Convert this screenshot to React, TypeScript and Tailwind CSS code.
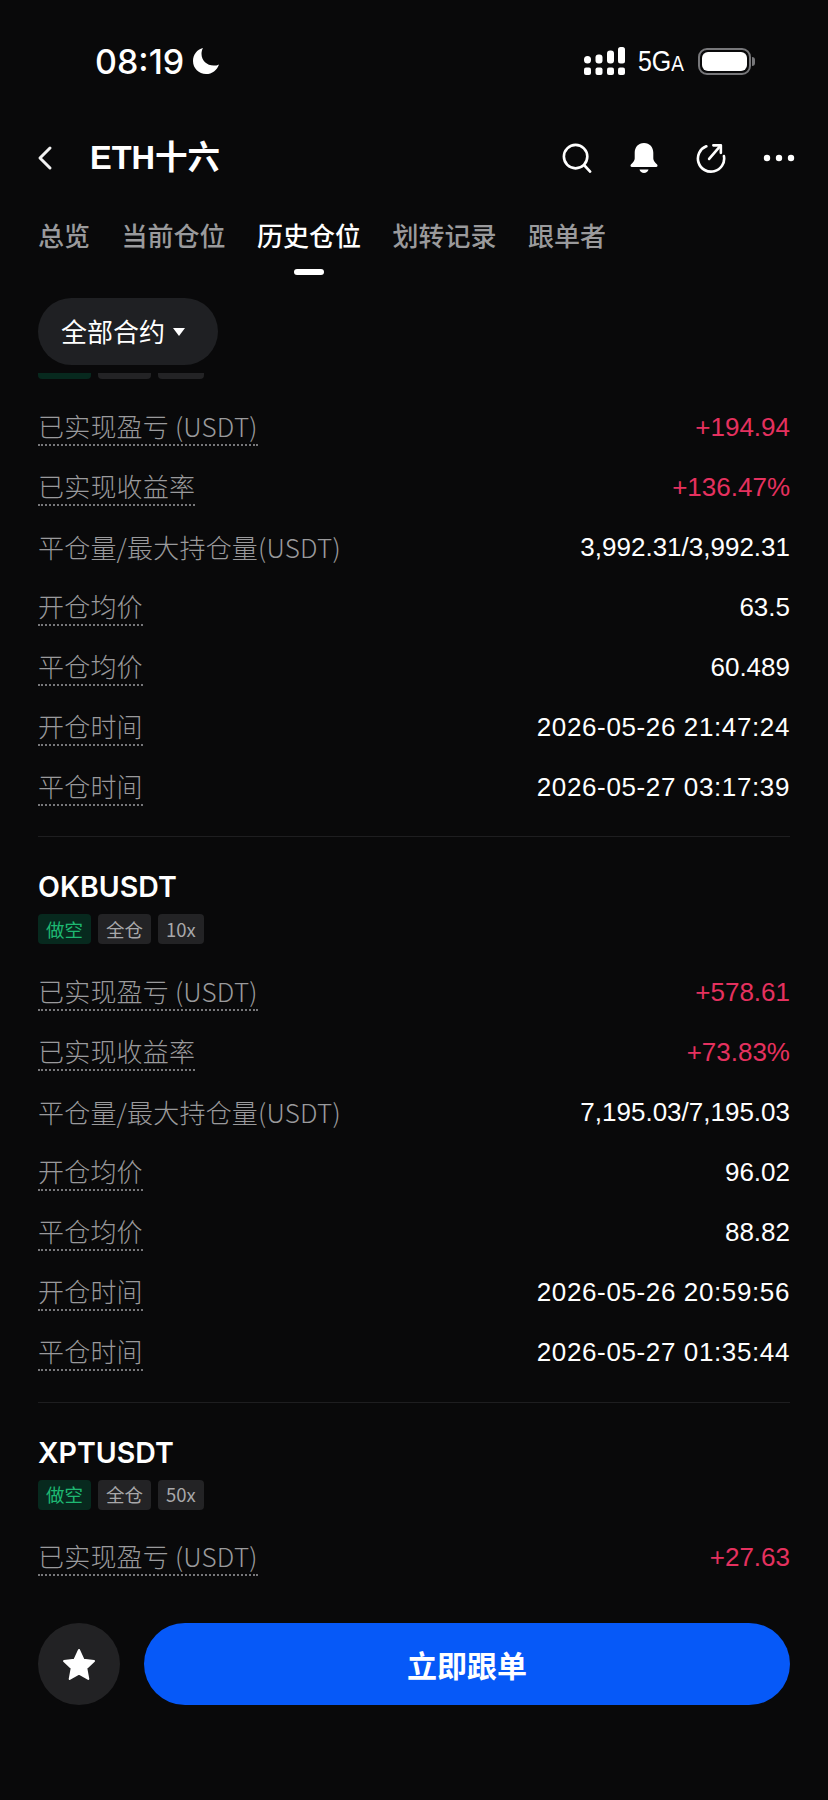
import React from "react";

const sans = "font-['Liberation_Sans','Noto_Sans_CJK_SC',sans-serif]";

type Row = { label: string; value: string; hint?: boolean; red?: boolean };
type Card = { symbol?: string; leverage?: string; rows: Row[] };

const makeRows = (
  pnl: string,
  rate: string,
  size: string,
  open: string,
  close: string,
  openAt: string,
  closeAt: string,
): Row[] => [
  { label: "已实现盈亏 (USDT)", value: pnl, hint: true, red: true },
  { label: "已实现收益率", value: rate, hint: true, red: true },
  { label: "平仓量/最大持仓量(USDT)", value: size },
  { label: "开仓均价", value: open, hint: true },
  { label: "平仓均价", value: close, hint: true },
  { label: "开仓时间", value: openAt, hint: true },
  { label: "平仓时间", value: closeAt, hint: true },
];

const cards: Card[] = [
  {
    // scrolled under the filter, only the bottom of its tags shows
    rows: makeRows(
      "+194.94",
      "+136.47%",
      "3,992.31/3,992.31",
      "63.5",
      "60.489",
      "2026-05-26 21:47:24",
      "2026-05-27 03:17:39",
    ),
  },
  {
    symbol: "OKBUSDT",
    leverage: "10x",
    rows: makeRows(
      "+578.61",
      "+73.83%",
      "7,195.03/7,195.03",
      "96.02",
      "88.82",
      "2026-05-26 20:59:56",
      "2026-05-27 01:35:44",
    ),
  },
  {
    symbol: "XPTUSDT",
    leverage: "50x",
    rows: [{ label: "已实现盈亏 (USDT)", value: "+27.63", hint: true, red: true }],
  },
];

const tabs = ["总览", "当前仓位", "历史仓位", "划转记录", "跟单者"];

const StatusBar = () => (
  <div className="flex h-[122px] shrink-0 items-center justify-between pl-[95px] pr-[73px]">
    <div className="flex items-center gap-[8px] text-white">
      <span className="font-['Inter',sans-serif] text-[34px] font-medium">08:19</span>
      <svg width="28" height="28" viewBox="0 0 28 28" fill="currentColor">
        <path d="M11 1C5 2.500 1 7.700 1 14c0 7.400 5.900 13 13 13 6.100 0 11-3.800 13-9.600-1.600.8-3.400 1.200-5.300 1.200C14.900 18.600 9.500 13.400 9.500 6.800 9.500 4.600 10 2.700 11 1z" />
      </svg>
    </div>
    <div className="flex items-center">
      <svg width="41" height="28" viewBox="0 0 41 28" fill="white">
        <rect x="0" y="9" width="7" height="7.500" rx="3.500" />
        <rect x="0" y="20.500" width="7" height="7.500" rx="2" />
        <rect x="11.500" y="7.500" width="7" height="9" rx="3" />
        <rect x="11.500" y="20.500" width="7" height="7.500" rx="2" />
        <rect x="23" y="3.500" width="7" height="13" rx="3" />
        <rect x="23" y="20.500" width="7" height="7.500" rx="2" />
        <rect x="34" y="0" width="7" height="16.500" rx="2.500" />
        <rect x="34" y="20.500" width="7" height="7.500" rx="2" />
      </svg>
      <span className="ml-[13px] scale-y-[1.15] font-['Liberation_Sans',sans-serif] text-[25px] leading-none text-white">
        5G<span className="text-[19px]">A</span>
      </span>
      <div className="ml-[14px] flex items-center">
        <div className="flex h-[27px] w-[53px] items-center rounded-[9px] border-[2px] border-[#77777a] p-[2px]">
          <div className="h-full w-full rounded-[6px] bg-white" />
        </div>
        <div className="ml-[1px] h-[9px] w-[3px] rounded-r-full bg-[#77777a]" />
      </div>
    </div>
  </div>
);

const NavBar = () => (
  <div className={`flex h-[72px] shrink-0 items-center justify-between pl-[37px] pr-[33px] ${sans}`}>
    <div className="flex items-center">
      <svg width="16" height="26" viewBox="0 0 16 26" fill="none" stroke="#f2f2f2" strokeWidth="3" strokeLinecap="round" strokeLinejoin="round">
        <path d="M13 3 3 13l10 10" />
      </svg>
      <span className="ml-[37px] text-[32.500px] font-bold text-white">ETH十六</span>
    </div>
    <div className="flex items-center gap-[37px]">
      <svg width="30" height="30" viewBox="0 0 32 32" fill="none" stroke="white" strokeWidth="2.800" strokeLinecap="round">
        <circle cx="14.500" cy="14.500" r="12.500" />
        <path d="m24 24 6 6.500" />
      </svg>
      <svg width="30" height="32" viewBox="0 0 30 32" fill="white">
        <path d="M15 1c-5.800 0-9.300 4.300-9.300 9.700v5.800c0 2-1.600 3.800-3.800 6-.9 1-.3 2.500 1 2.500h24.200c1.300 0 1.900-1.500 1-2.500-2.200-2.200-3.800-4-3.800-6v-5.800C24.300 5.300 20.800 1 15 1z" />
        <path d="M10.500 27.500h9c-.5 2.200-2.300 3.500-4.500 3.500s-4-1.300-4.500-3.500z" />
      </svg>
      <svg width="30" height="30" viewBox="0 0 32 32" fill="none" stroke="white" strokeWidth="2.800" strokeLinecap="round" strokeLinejoin="round">
        <path d="M11 3.500A14 14 0 1 0 29.800 14" />
        <path d="M14 17 25.500 3.500" />
        <path d="M18.500 2.500h8v8" />
      </svg>
      <svg width="32" height="8" viewBox="0 0 32 8" fill="white">
        <circle cx="4" cy="4" r="3.200" />
        <circle cx="16" cy="4" r="3.200" />
        <circle cx="28" cy="4" r="3.200" />
      </svg>
    </div>
  </div>
);

const Tabs = () => (
  <div className="flex h-[74px] shrink-0 items-start gap-[31.500px] px-[38px] pt-[22px] font-['Noto_Sans_CJK_SC',sans-serif] text-[26px] leading-[38px]">
    {tabs.map((t) => (
      <div key={t} className={t === "历史仓位" ? "relative font-medium text-white" : "font-medium text-[#9a9a9c]"}>
        {t}
        {t === "历史仓位" && (
          <div className="absolute left-1/2 top-[53px] h-[6px] w-[30px] -translate-x-1/2 rounded-full bg-white" />
        )}
      </div>
    ))}
  </div>
);

const Tag = ({ text, green }: { text?: string; green?: boolean }) => (
  <span
    className={`flex h-[30px] items-center rounded-[4px] px-[8px] text-[18.500px] ${
      green ? "bg-[#07291e] text-[#1eb872]" : "bg-[#232325] text-[#a8a8aa]"
    }`}
  >
    {text}
  </span>
);

const PositionCard = ({ card, last }: { card: Card; last: boolean }) => (
  <div className={last ? "" : "border-b border-[#1e1e20] pb-[19.400px]"}>
    {card.symbol ? (
      <>
        <div className="mt-[32px] h-[36px] font-['Inter',sans-serif] text-[28.500px] font-semibold leading-[36px] text-white">
          {card.symbol}
        </div>
        <div className="mt-[9px] flex gap-[7px] font-['Noto_Sans_CJK_SC',sans-serif]">
          <Tag text="做空" green />
          <Tag text="全仓" />
          <Tag text={card.leverage} />
        </div>
      </>
    ) : (
      <div className="-mt-[24px] flex gap-[7px]">
        <span className="h-[30px] w-[53px] rounded-[4px] bg-[#07291e]" />
        <span className="h-[30px] w-[53px] rounded-[4px] bg-[#232325]" />
        <span className="h-[30px] w-[46px] rounded-[4px] bg-[#232325]" />
      </div>
    )}
    <div className="mt-[18px]">
      {card.rows.map((r) => (
        <div key={r.label} className="flex h-[60px] items-center justify-between">
          <span
            className={`pb-[1px] font-['Noto_Sans_CJK_SC',sans-serif] text-[26px] font-light leading-[34px] tracking-[0.2px] text-[#9a9a9c] ${
              r.hint ? "border-b-[2px] border-dotted border-[#77777a]" : ""
            }`}
          >
            {r.label}
          </span>
          <span
            className={`text-[26px] ${r.red ? "text-[#e5315f]" : "text-white"} ${
              r.label.endsWith("时间") ? "tracking-[0.62px]" : ""
            }`}
          >
            {r.value}
          </span>
        </div>
      ))}
    </div>
  </div>
);

export default function App() {
  return (
    <div className={`flex h-[1800px] w-[828px] flex-col overflow-hidden bg-[#09090a] ${sans}`}>
      <StatusBar />
      <NavBar />
      <Tabs />
      <div className="h-[105px] shrink-0 px-[38px] pt-[30px]">
        <div className="flex h-[67px] w-[180px] items-center gap-[7px] rounded-full bg-[#1f2023] pl-[23px] font-['Noto_Sans_CJK_SC',sans-serif] text-[26px] text-white">
          <span className="-mt-[3px]">全部合约</span>
          <svg width="14" height="10" viewBox="0 0 14 10" fill="white">
            <path d="M1 1h12L7 9z" />
          </svg>
        </div>
      </div>
      <div className="flex-1 overflow-hidden px-[38px]">
        {cards.map((c, i) => (
          <PositionCard key={i} card={c} last={i === cards.length - 1} />
        ))}
      </div>
      <div className="flex h-[177px] shrink-0 gap-[24px] px-[38px]">
        <button className="flex h-[82px] w-[82px] items-center justify-center rounded-full bg-[#222224]">
          <svg width="34" height="32" viewBox="0 0 34 32" fill="white" stroke="white" strokeWidth="2" strokeLinejoin="round">
            <path d="m17 2 4.600 9.800 10.400 1.300-7.700 7.200 2 10.700-9.300-5.300-9.300 5.300 2-10.700L2 13.100l10.400-1.300z" />
          </svg>
        </button>
        <button className="flex h-[82px] flex-1 items-center justify-center rounded-full bg-[#0659f8] font-['Noto_Sans_CJK_SC',sans-serif] text-[30px] font-bold text-white">
          立即跟单
        </button>
      </div>
    </div>
  );
}
